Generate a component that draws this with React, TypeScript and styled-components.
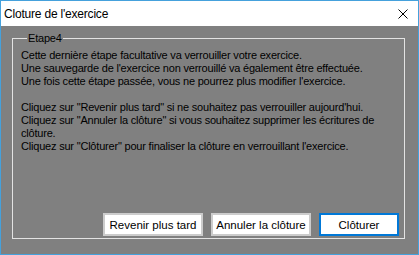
import React from "react";
import styled, { createGlobalStyle } from "styled-components";

const GlobalStyle = createGlobalStyle`
  html, body { margin: 0; padding: 0; background: #ffffff; }
  * { box-sizing: border-box; }
`;

const Window = styled.div`
  width: 419px;
  height: 255px;
  border: 1px solid #45a1dc;
  display: flex;
  flex-direction: column;
  background: #808080;
`;

const TitleBar = styled.div`
  height: 25px;
  background: #ffffff;
  display: flex;
  align-items: center;
  justify-content: space-between;
  padding-left: 3px;
  padding-right: 10px;
`;

const Title = styled.span`
  font-family: "Liberation Sans", Arial, sans-serif;
  font-size: 12px;
  letter-spacing: -0.2px;
  color: #000000;
  line-height: 16px;
`;

const CloseIcon = styled.svg`
  display: block;
  width: 10px;
  height: 10px;
`;

const Body = styled.div`
  flex: 1;
  display: flex;
  padding: 6px 13px 15px 11px;
`;

const Group = styled.fieldset`
  flex: 1;
  margin: 0;
  padding: 0 5px 2px 8px;
  border: 1px solid #e3e3e3;
  display: flex;
  flex-direction: column;
  min-width: 0;
`;

const Legend = styled.legend`
  margin-left: 6px;
  padding: 0 1px;
  font-family: "Liberation Sans", Arial, sans-serif;
  font-size: 11px;
  line-height: 13px;
  letter-spacing: -0.2px;
  color: #000000;
`;

const Message = styled.div`
  padding-top: 4px;
  font-family: "Liberation Sans", Arial, sans-serif;
  font-size: 11px;
  line-height: 13px;
  letter-spacing: -0.2px;
  color: #000000;
`;

const Line = styled.div`
  height: 13px;
  white-space: nowrap;
`;

const ButtonRow = styled.div`
  margin-top: auto;
  display: flex;
  justify-content: flex-end;
  gap: 8px;
`;

const Button = styled.button<{ $primary?: boolean; $w: number }>`
  width: ${(p) => p.$w}px;
  height: 23px;
  padding: 0;
  background: #ffffff;
  border: 2px solid ${(p) => (p.$primary ? "#0078d7" : "#cccccc")};
  font-family: "Liberation Sans", Arial, sans-serif;
  font-size: 11.5px;
  color: #000000;
  cursor: default;
`;

const lines = [
  "Cette dernière étape facultative va verrouiller votre exercice.",
  "Une sauvegarde de l'exercice non verrouillé va également être effectuée.",
  "Une fois cette étape passée, vous ne pourrez plus modifier l'exercice.",
  "",
  "Cliquez sur \"Revenir plus tard\" si ne souhaitez pas verrouiller aujourd'hui.",
  "Cliquez sur \"Annuler la clôture\" si vous souhaitez supprimer les écritures de",
  "clôture.",
  "Cliquez sur \"Clôturer\" pour finaliser la clôture en verrouillant l'exercice.",
];

export default function App() {
  return (
    <>
      <GlobalStyle />
      <Window>
        <TitleBar>
          <Title>Cloture de l'exercice</Title>
          <CloseIcon viewBox="0 0 10 10">
            <path d="M0.5 0.5 L9.5 9.5 M9.5 0.5 L0.5 9.5" stroke="#000" strokeWidth="1" fill="none" />
          </CloseIcon>
        </TitleBar>
        <Body>
          <Group>
            <Legend>Etape4</Legend>
            <Message>
              {lines.map((l, i) => (
                <Line key={i}>{l}</Line>
              ))}
            </Message>
            <ButtonRow>
              <Button $w={100}>Revenir plus tard</Button>
              <Button $w={100}>Annuler la clôture</Button>
              <Button $w={80} $primary>Clôturer</Button>
            </ButtonRow>
          </Group>
        </Body>
      </Window>
    </>
  );
}
